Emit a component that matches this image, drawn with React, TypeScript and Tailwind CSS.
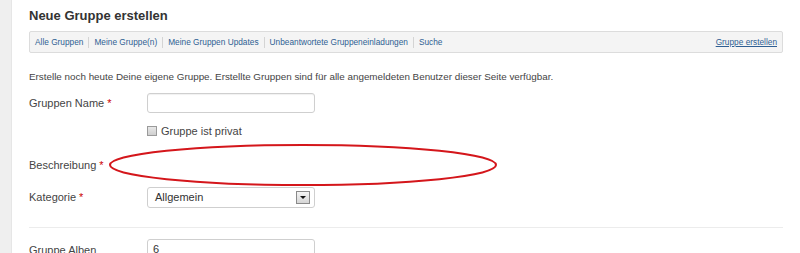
import React from "react"

const links = ["Alle Gruppen", "Meine Gruppe(n)", "Meine Gruppen Updates", "Unbeantwortete Gruppeneinladungen", "Suche"]

function Label({ text, required }: { text: string; required?: boolean }) {
  return (
    <div className="w-[118px] shrink-0 text-[11px] text-[#444]">
      {text}
      {required && <span className="ml-[3px] text-[#c00]">*</span>}
    </div>
  )
}

export default function App() {
  return (
    <div className="flex h-[253px] w-[800px] overflow-hidden bg-white" style={{ fontFamily: '"Liberation Sans", Arial, sans-serif' }}>
      {/* linke Leiste */}
      <div className="w-[12px] shrink-0 border-r border-[#e6e6e6] bg-[#efefef]"></div>

      <div className="relative flex-1 pl-[17px] pr-[17px]">
        <h1 className="mt-[7px] h-[17px] text-[13px] font-bold leading-[17px] text-[#333]">Neue Gruppe erstellen</h1>

        {/* Navigation */}
        <div className="mt-[7px] flex h-[22px] items-center justify-between rounded-[2px] border border-[#dcdcdc] bg-[#f4f4f4] px-[5px] text-[8.3px] text-[#2f5f93]">
          <div className="flex items-center">
            {links.map((l, i) => (
              <span key={l} className={i > 0 ? "ml-[5px] border-l border-[#d4d4d4] pl-[5px] leading-[11px]" : "leading-[11px]"}>
                {l}
              </span>
            ))}
          </div>
          <span className="underline">Gruppe erstellen</span>
        </div>

        <p className="mt-[17px] text-[9.85px] leading-[14px] text-[#444]">
          Erstelle noch heute Deine eigene Gruppe. Erstellte Gruppen sind für alle angemeldeten Benutzer dieser Seite verfügbar.
        </p>

        {/* Gruppen Name */}
        <div className="mt-[9px] flex items-center">
          <Label text="Gruppen Name" required />
          <div className="h-[20px] w-[168px] rounded-[3px] border border-[#cfcfcf] bg-white shadow-[inset_0_1px_1px_rgba(0,0,0,0.06)]"></div>
        </div>

        {/* Privat */}
        <div className="mt-[13px] flex h-[10px] items-center pl-[118px]">
          <div className="h-[10px] w-[10px] border border-[#9a9a9a] bg-gradient-to-b from-[#e8e8e8] to-[#cfcfcf]"></div>
          <span className="ml-[4px] text-[11px] text-[#444]">Gruppe ist privat</span>
        </div>

        {/* Beschreibung */}
        <div className="mt-[20px] flex h-[18px] items-center">
          <Label text="Beschreibung" required />
        </div>

        {/* Kategorie */}
        <div className="mt-[13px] flex items-center">
          <Label text="Kategorie" required />
          <div className="flex h-[21px] w-[168px] items-center justify-between rounded-[3px] border border-[#cfcfcf] bg-white pl-[7px] pr-[4px]">
            <span className="text-[11px] text-[#333]">Allgemein</span>
            <div className="flex h-[13px] w-[14px] items-center justify-center border border-[#8a8a8a] bg-gradient-to-b from-[#f4f4f4] to-[#d6d6d6]">
              <div className="h-0 w-0 border-x-[3px] border-t-[3px] border-x-transparent border-t-[#111]"></div>
            </div>
          </div>
        </div>

        <div className="mt-[19px] border-t border-[#ececec]"></div>

        {/* Gruppe Alben */}
        <div className="mt-[11px] flex items-start">
          <div className="w-[118px] shrink-0 pt-[3px] text-[11px] text-[#444]">Gruppe Alben</div>
          <div className="h-[20px] w-[168px] rounded-[3px] border border-[#cfcfcf] bg-white pl-[5px] text-[11px] leading-[18px] text-[#333]">6</div>
        </div>

        {/* rote Markierung */}
        <svg className="pointer-events-none absolute left-[96px] top-[142px]" width="392" height="46" viewBox="0 0 392 46">
          <ellipse cx="195" cy="23" rx="193" ry="20" fill="none" stroke="#d4161b" strokeWidth="2" />
        </svg>
      </div>
    </div>
  )
}
